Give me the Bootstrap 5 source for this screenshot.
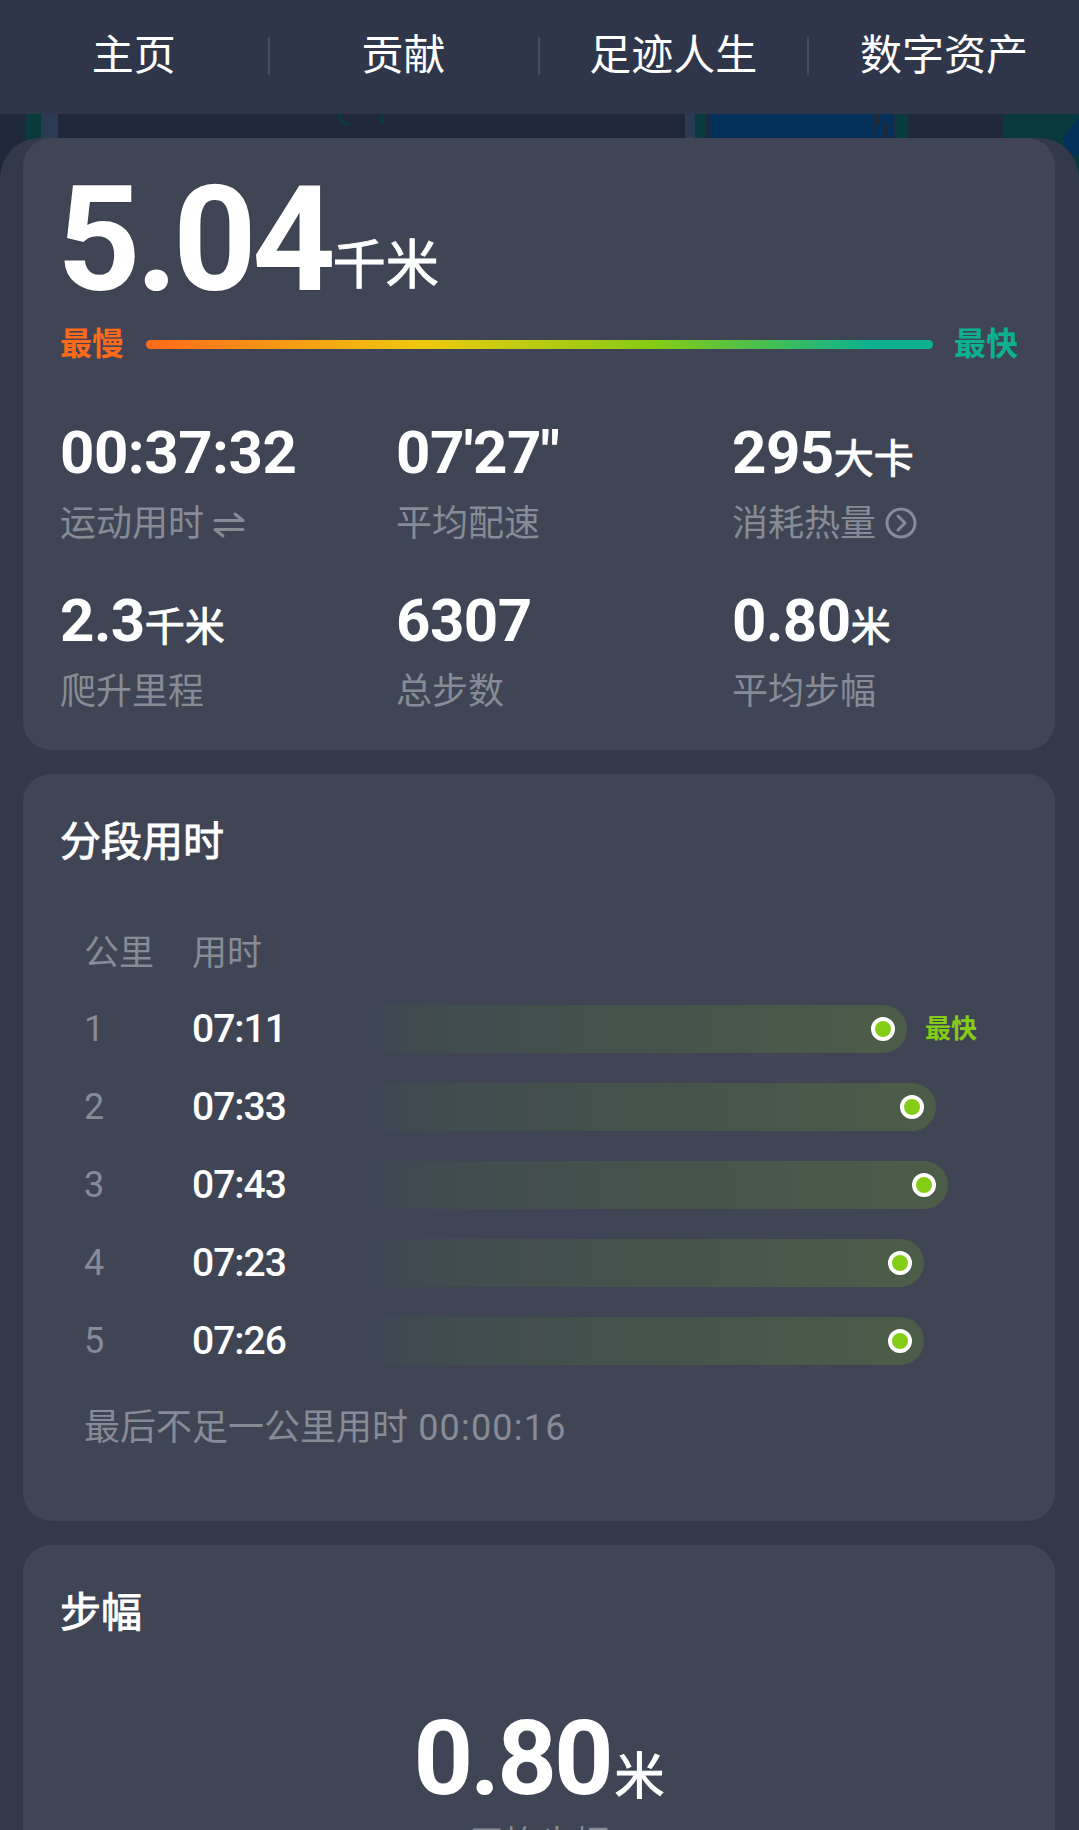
<!DOCTYPE html>
<html lang="zh">
<head>
    <meta charset="UTF-8">
    <meta name="viewport" content="width=device-width, initial-scale=1.0">
    <title>运动详情</title>
    <link href="https://cdn.jsdelivr.net/npm/bootstrap@5.3.0/dist/css/bootstrap.min.css" rel="stylesheet">
    <style>
        html, body {
            height: 1830px;
            overflow: hidden;
        }

        body {
            font-family: Roboto, "Noto Sans CJK SC", sans-serif;
            background-color: #1f2839;
            color: #fff;
        }

        /* top tabs */
        .tab-bar {
            height: 114px;
            background-color: #2f3649;
            padding-bottom: 2px;
        }

        .tab-bar .nav-link {
            padding: 0;
            color: #fff;
            font-size: 42px;
            line-height: 38px;
            border-right: 2px solid #474e5e;
        }

        .tab-bar .nav-item:last-child .nav-link {
            border-right: 0;
        }

        /* strip of map that shows between the tabs and the sheet */
        .map-back {
            position: relative;
            padding-top: 24px;
            background-image: linear-gradient(90deg,
                #1f2839 25px, #0a3b3c 25px, #0a3b3c 41px, #2b3b54 41px, #2b3b54 58px,
                #1f2839 58px, #1f2839 685px, #2b3b54 685px, #2b3b54 695px,
                #0a3b3c 695px, #0a3b3c 705px, #1f2839 705px, #1f2839 710px,
                #03305a 710px, #03305a 873px, #1f2839 873px, #1f2839 895px,
                #0a3b3c 895px, #0a3b3c 908px, #1f2839 908px, #1f2839 1003px,
                #08393b 1003px);
        }

        .map-marks {
            position: absolute;
            top: 0;
            left: 0;
        }

        .sheet {
            position: relative;
            background-color: #333949;
            border-radius: 40px 40px 0 0;
            padding: 0 24px 0 23px;
        }

        .panel {
            background-color: #3f4555;
            border: 0;
            border-radius: 28px;
            color: #fff;
            margin-bottom: 24px;
            padding-left: 37px;
        }

        .panel-total {
            height: 612px;
        }

        .panel-splits {
            height: 747px;
        }

        .panel-title {
            font-size: 41px;
            line-height: 48px;
            font-weight: 400;
            -webkit-text-stroke: .9px #fff;
            margin: 0;
            padding-top: 44px;
        }

        .total-num {
            font-size: 146px;
            line-height: 120px;
            font-weight: 700;
            letter-spacing: -5px;
            padding-top: 43px;
            margin-left: -3px;
            text-shadow: 0 0 1px rgba(0, 0, 0, .7);
        }

        .total-unit {
            font-size: 53px;
            line-height: 1;
            font-weight: 400;
            -webkit-text-stroke: 1px #fff;
            letter-spacing: 0;
            margin-left: 2px;
            vertical-align: 6px;
            text-shadow: none;
        }

        .pace-line {
            margin-top: 23px;
            padding-right: 37px;
        }

        .pace-slow, .pace-fast {
            font-size: 32px;
            line-height: 40px;
            font-weight: 700;
        }

        .pace-slow { color: #ff6a1a; }
        .pace-fast { color: #0cb28f; }

        .pace-bar {
            height: 9px;
            border-radius: 5px;
            margin: 0 21px 0 22px;
            background-image: linear-gradient(90deg, #ff6a1a, #eec90f 35%, #84cc16 65%, #0cb28f 92%);
        }

        .stat-grid {
            grid-template-columns: 336px 336px 1fr;
            row-gap: 37px;
            margin-top: 53px;
        }

        .stat-num {
            height: 72px;
            font-size: 60px;
            line-height: 72px;
            font-weight: 700;
            letter-spacing: -.5px;
            white-space: nowrap;
        }

        .stat-unit {
            font-size: 40px;
            font-weight: 400;
            -webkit-text-stroke: .9px #fff;
            letter-spacing: 0;
        }

        .stat-label {
            height: 48px;
            font-size: 36px;
            line-height: 48px;
            margin-top: 11px;
            color: #868b95;
            white-space: nowrap;
        }

        .stat-label svg {
            margin-left: 9px;
            vertical-align: -3px;
        }

        /* splits table */
        .split-wrap {
            padding-left: 24px;
            margin-top: 64px;
        }

        .split-head {
            line-height: 48px;
            color: #868b95;
            margin-bottom: 27px;
        }

        .split-head > div {
            font-size: 35px;
        }

        .split-row {
            height: 48px;
            margin-bottom: 30px;
        }

        .split-no {
            width: 108px;
            font-size: 36px;
            color: #868b95;
        }

        .split-time {
            width: 169px;
            font-size: 39px;
            font-weight: 500;
            letter-spacing: -1px;
        }

        .split-bar {
            height: 48px;
            border-radius: 24px;
            padding-right: 12px;
            background-image: linear-gradient(90deg, rgba(64, 76, 80, 0), #404c50 12%, #4b5c48 95%);
        }

        .split-dot {
            width: 24px;
            height: 24px;
            border-radius: 50%;
            background-color: #84cc16;
            border: 4.5px solid #fff;
        }

        .split-best {
            font-size: 26px;
            font-weight: 700;
            color: #84cc16;
            margin-left: 18px;
        }

        .split-foot {
            font-size: 36px;
            line-height: 48px;
            color: #868b95;
            margin-top: 39px;
        }

        .split-foot span {
            letter-spacing: 1.2px;
        }

        /* stride */
        .stride-num {
            font-size: 104px;
            line-height: 100px;
            font-weight: 700;
            letter-spacing: -3px;
            margin-top: 72px;
            padding-right: 37px;
        }

        .stride-unit {
            font-size: 50px;
            font-weight: 400;
            -webkit-text-stroke: 1px #fff;
            letter-spacing: 0;
            margin-left: 4px;
        }

        .stride-label {
            font-size: 35px;
            color: #868b95;
            padding-right: 37px;
            margin-top: -8px;
        }
    </style>
</head>
<body>
    <nav class="tab-bar nav nav-justified align-items-center">
        <div class="nav-item"><a class="nav-link" href="#">主页</a></div>
        <div class="nav-item"><a class="nav-link" href="#">贡献</a></div>
        <div class="nav-item"><a class="nav-link" href="#">足迹人生</a></div>
        <div class="nav-item"><a class="nav-link" href="#">数字资产</a></div>
    </nav>

    <div class="map-back">
        <svg class="map-marks" width="1079" height="60" viewBox="0 0 1079 60" fill="none">
            <path d="M339 0C339 6 343 9 349 10" stroke="#0a3b3c" stroke-width="3"/>
            <path d="M382 0V9" stroke="#0a3b3c" stroke-width="3"/>
            <path d="M874 24L877 10H880V0H893V24H888V8H884V24Z" fill="#03305a"/>
            <path d="M1063 0H1079V10L1063 30Z" fill="#08393b"/>
            <path d="M1079 3L1063 24L1069 44L1079 40Z" fill="#03305a"/>
        </svg>
        <div class="sheet">
            <!-- totals -->
            <section class="card panel panel-total">
                <div class="total-num">5.04<span class="total-unit">千米</span></div>
                <div class="pace-line d-flex align-items-center">
                    <span class="pace-slow">最慢</span>
                    <div class="pace-bar flex-grow-1"></div>
                    <span class="pace-fast">最快</span>
                </div>
                <div class="stat-grid d-grid">
                    <div>
                        <div class="stat-num">00:37:32</div>
                        <div class="stat-label">运动用时<svg width="32" height="28" viewBox="0 0 32 28" fill="none" stroke="#868b95" stroke-width="3" stroke-linecap="round" stroke-linejoin="round"><path d="M2 9.5H30L22 3"/><path d="M30 18.5H2L10 25"/></svg></div>
                    </div>
                    <div>
                        <div class="stat-num">07'27"</div>
                        <div class="stat-label">平均配速</div>
                    </div>
                    <div>
                        <div class="stat-num">295<span class="stat-unit">大卡</span></div>
                        <div class="stat-label">消耗热量<svg width="32" height="32" viewBox="0 0 32 32" fill="none" stroke="#868b95" stroke-width="3" stroke-linecap="round" stroke-linejoin="round"><circle cx="16" cy="16" r="14"/><path d="M13 9L20 16L13 23"/></svg></div>
                    </div>
                    <div>
                        <div class="stat-num">2.3<span class="stat-unit">千米</span></div>
                        <div class="stat-label">爬升里程</div>
                    </div>
                    <div>
                        <div class="stat-num">6307</div>
                        <div class="stat-label">总步数</div>
                    </div>
                    <div>
                        <div class="stat-num">0.80<span class="stat-unit">米</span></div>
                        <div class="stat-label">平均步幅</div>
                    </div>
                </div>
            </section>

            <!-- per kilometre -->
            <section class="card panel panel-splits">
                <h2 class="panel-title">分段用时</h2>
                <div class="split-wrap">
                    <div class="split-head d-flex">
                        <div class="split-no">公里</div>
                        <div>用时</div>
                    </div>
                    <div class="split-row d-flex align-items-center">
                        <div class="split-no">1</div>
                        <div class="split-time">07:11</div>
                        <div class="split-bar d-flex align-items-center justify-content-end" style="width: 546px"><span class="split-dot"></span></div>
                        <span class="split-best">最快</span>
                    </div>
                    <div class="split-row d-flex align-items-center">
                        <div class="split-no">2</div>
                        <div class="split-time">07:33</div>
                        <div class="split-bar d-flex align-items-center justify-content-end" style="width: 575px"><span class="split-dot"></span></div>
                    </div>
                    <div class="split-row d-flex align-items-center">
                        <div class="split-no">3</div>
                        <div class="split-time">07:43</div>
                        <div class="split-bar d-flex align-items-center justify-content-end" style="width: 587px"><span class="split-dot"></span></div>
                    </div>
                    <div class="split-row d-flex align-items-center">
                        <div class="split-no">4</div>
                        <div class="split-time">07:23</div>
                        <div class="split-bar d-flex align-items-center justify-content-end" style="width: 563px"><span class="split-dot"></span></div>
                    </div>
                    <div class="split-row d-flex align-items-center">
                        <div class="split-no">5</div>
                        <div class="split-time">07:26</div>
                        <div class="split-bar d-flex align-items-center justify-content-end" style="width: 563px"><span class="split-dot"></span></div>
                    </div>
                    <div class="split-foot">最后不足一公里用时<span> 00:00:16</span></div>
                </div>
            </section>

            <!-- stride -->
            <section class="card panel">
                <h2 class="panel-title">步幅</h2>
                <div class="stride-num text-center">0.80<span class="stride-unit">米</span></div>
                <div class="stride-label text-center">平均步幅</div>
            </section>
        </div>
    </div>

    <script src="https://cdn.jsdelivr.net/npm/bootstrap@5.3.0/dist/js/bootstrap.bundle.min.js"></script>
</body>
</html>
